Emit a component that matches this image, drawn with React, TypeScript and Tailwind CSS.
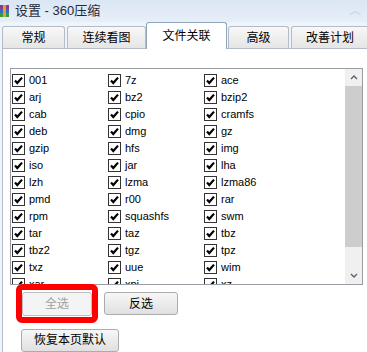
import React from "react";

const cols = [
  ["001", "arj", "cab", "deb", "gzip", "iso", "lzh", "pmd", "rpm", "tar", "tbz2", "txz", "xar"],
  ["7z", "bz2", "cpio", "dmg", "hfs", "jar", "lzma", "r00", "squashfs", "taz", "tgz", "uue", "xpi"],
  ["ace", "bzip2", "cramfs", "gz", "img", "lha", "lzma86", "rar", "swm", "tbz", "tpz", "wim", "xz"],
];

const tabs = ["常规", "连续看图", "文件关联", "高级", "改善计划"];
const tabSizes = [
  "ml-[2px] w-[63px]",
  "ml-[2px] w-[79px]",
  "ml-0 w-[81px]",
  "ml-[1px] w-[61px]",
  "ml-[2px] w-[78px]",
];

const Check = () => (
  <svg width="13" height="13" viewBox="0 0 13 13" className="shrink-0">
    <rect x="0.5" y="0.5" width="12" height="12" fill="#fff" stroke="#333" />
    <path d="M3 6.5 L5.3 9 L10 3.6" fill="none" stroke="#000" strokeWidth="2.2" />
  </svg>
);

const AppIcon = () => (
  <svg width="9" height="12" viewBox="0 0 9 12">
    <rect x="0" y="0" width="9" height="4" fill="#8b3a8f" />
    <rect x="0" y="4" width="9" height="4" fill="#2f6fc0" />
    <rect x="0" y="8" width="9" height="4" fill="#3c9a3a" />
    <rect x="3" y="0" width="3" height="12" fill="#d9a53a" />
  </svg>
);

const btn =
  "h-[23px] rounded-[3px] border border-[#acacac] bg-gradient-to-b from-[#f7f7f7] to-[#e0e0e0] text-[12px] text-black";

export default function App() {
  return (
    <div
      className="relative h-[352px] w-[367px] overflow-hidden bg-[#eef4fb]"
      style={{ fontFamily: '"Liberation Sans", "Noto Sans CJK SC", sans-serif' }}
    >
      {/* title bar */}
      <div className="flex h-[22px] items-center bg-gradient-to-b from-[#dbe6f4] to-[#e6eef8]">
        <AppIcon />
        <span className="ml-[6px] text-[13px] text-[#1e2a3a]">设置 - 360压缩</span>
        <span className="ml-auto mr-[6px] text-[12px] text-[#c8d2de]">︿</span>
      </div>

      {/* tab strip */}
      <div className="flex h-[26px] items-end">
        {tabs.map((t, i) =>
          i === 2 ? (
            <div
              key={t}
              className={`${tabSizes[i]} relative z-10 -mb-px flex h-[27px] shrink-0 items-center justify-center rounded-t-[3px] border border-b-0 border-[#8fa4bd] bg-white text-[12px] text-black`}
            >
              {t}
            </div>
          ) : (
            <div
              key={t}
              className={`${tabSizes[i]} flex h-[22px] shrink-0 items-center justify-center rounded-t-[3px] border border-b-0 border-[#b5bcc6] bg-gradient-to-b from-[#f8f8f8] to-[#e5e5e5] text-[12px] text-black`}
            >
              {t}
            </div>
          )
        )}
      </div>

      {/* panel */}
      <div className="ml-[2px] h-[304px] border-l border-t border-[#b5bcc6] bg-white pl-[7px] pt-[19px]">
        <div className="flex h-[217px] w-[353px] border border-[#9a9ea4] bg-white">
          <div className="h-full flex-1 overflow-hidden pl-px pt-[3px]">
            {cols[0].map((_, r) => (
              <div key={r} className="grid h-[17px] grid-cols-[96px_96px_96px] items-center">
                {cols.map((c) => (
                  <div key={c[r]} className="flex items-center gap-[4px] text-[11px] text-black">
                    <Check />
                    <span>{c[r]}</span>
                  </div>
                ))}
              </div>
            ))}
          </div>
          {/* scrollbar */}
          <div className="flex w-[17px] flex-col bg-[#f0f0f0]">
            <div className="flex h-[17px] items-center justify-center">
              <svg width="8" height="5" viewBox="0 0 8 5">
                <path d="M1 4 L4 1 L7 4" fill="none" stroke="#606060" strokeWidth="1.4" />
              </svg>
            </div>
            <div className="h-[161px] bg-[#cdcdcd]" />
            <div className="flex-1" />
            <div className="flex h-[17px] items-center justify-center">
              <svg width="8" height="5" viewBox="0 0 8 5">
                <path d="M1 1 L4 4 L7 1" fill="none" stroke="#606060" strokeWidth="1.4" />
              </svg>
            </div>
          </div>
        </div>

        <div className="mt-[6px] flex items-center pl-[12px]">
          <div className="relative">
            <button className="h-[24px] w-[70px] rounded-[3px] border border-[#bfbfbf] bg-[#f4f4f4] text-[12px] text-[#a0a0a0]">
              全选
            </button>
            <span className="pointer-events-none absolute -inset-x-[6px] -bottom-[7px] -top-[7px] rounded-[6px] border-[6px] border-[#ff0000]" />
          </div>
          <button className={`${btn} ml-[12px] w-[74px]`}>反选</button>
        </div>

        <div className="mt-[11px] pl-[11px]">
          <button className={`${btn} w-[98px]`}>恢复本页默认</button>
        </div>
      </div>
    </div>
  );
}
